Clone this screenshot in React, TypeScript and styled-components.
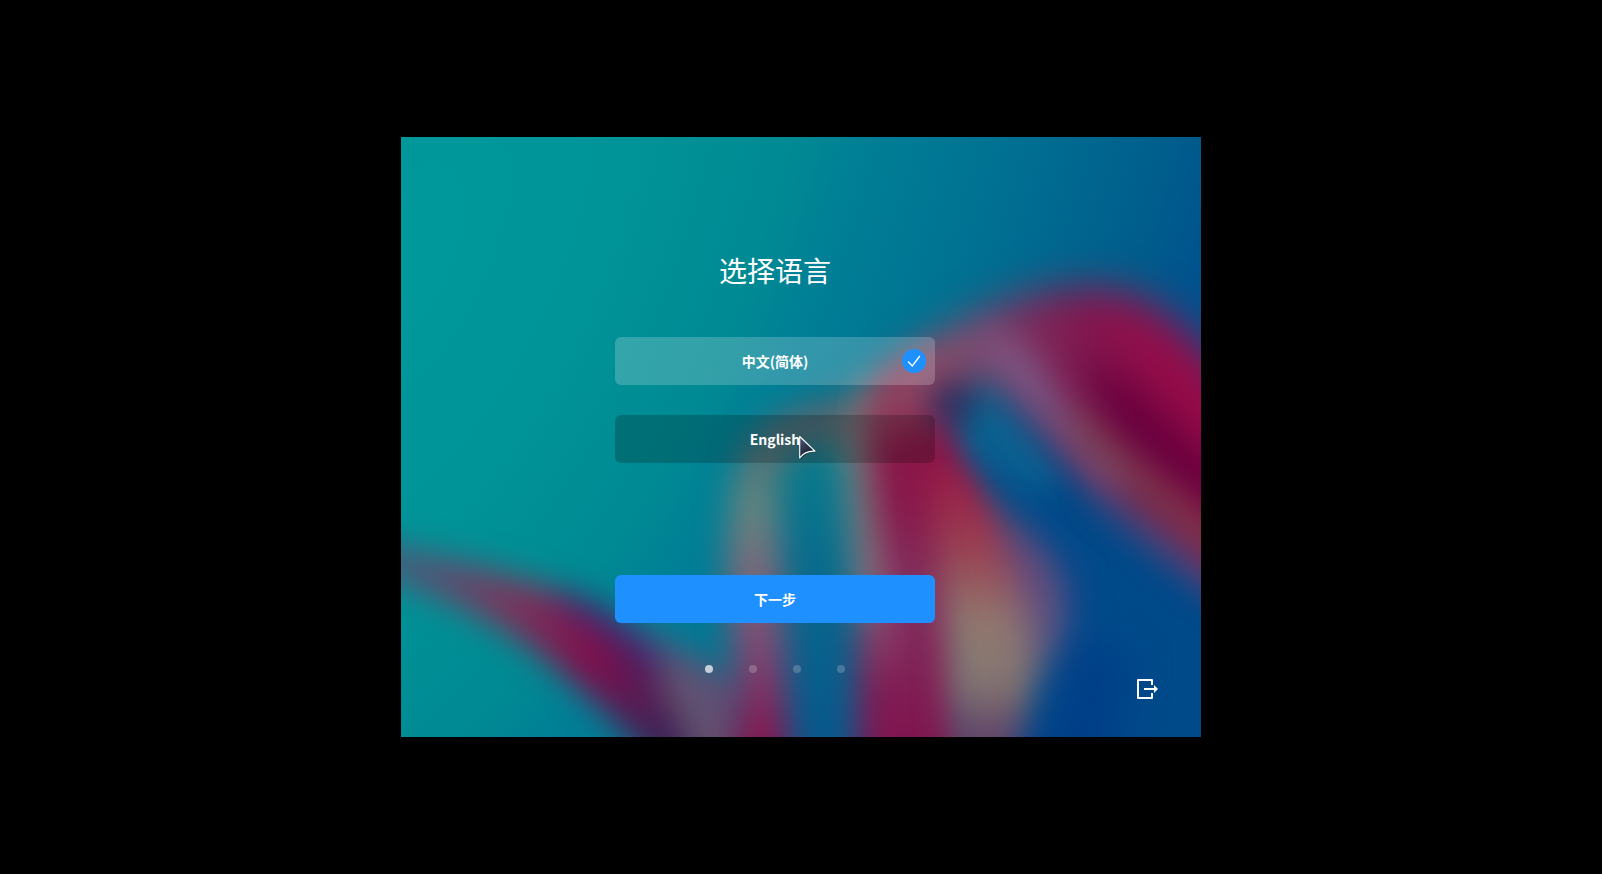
import React, { useState } from 'react';
import styled, { createGlobalStyle } from 'styled-components';

const GlobalStyle = createGlobalStyle`
  *, *::before, *::after { box-sizing: border-box; }
  body {
    margin: 0;
    background: #000;
    color: #fff;
    font-family: "Noto Sans CJK SC", "Noto Sans", sans-serif;
  }
`;

const Desktop = styled.div`
  min-height: 100vh;
  display: grid;
  place-items: center;
`;

const Screen = styled.main`
  position: relative;
  isolation: isolate;
  overflow: hidden;
  width: 100%;
  max-width: 800px;
  min-height: 600px;
  display: grid;
  grid-template-columns: 1fr auto;
`;

const WallpaperArt = styled.svg`
  position: absolute;
  inset: 0;
  z-index: -1;
  width: 100%;
  height: 100%;
`;

const Content = styled.form`
  display: flex;
  flex-direction: column;
  align-items: center;
  padding: 113px 0 64px 12px;
`;

const Title = styled.h1`
  margin: 0 0 47px;
  font-size: 28px;
  line-height: 40px;
  font-weight: 400;
`;

const Options = styled.fieldset`
  width: 100%;
  max-width: 320px;
  margin: 0 0 112px;
  padding: 0;
  border: 0;
  display: grid;
  gap: 30px;
`;

const Option = styled.label<{ $selected: boolean }>`
  position: relative;
  display: grid;
  grid-template-columns: 1fr auto 1fr;
  align-items: center;
  height: 48px;
  padding: 0 9px;
  border-radius: 6px;
  font-size: 14px;
  line-height: 20px;
  font-weight: 700;
  background: ${(p) => (p.$selected ? 'rgba(255, 255, 255, 0.2)' : 'rgba(0, 0, 0, 0.2)')};
`;

const Radio = styled.input`
  appearance: none;
  margin: 0;
  width: 0;
  height: 0;
`;

const CheckIcon = styled.svg`
  justify-self: end;
  width: 24px;
  height: 24px;
`;

const Pointer = styled.svg`
  position: absolute;
  left: 184px;
  top: 20px;
  width: 20px;
  height: 26px;
  pointer-events: none;
`;

const NextButton = styled.button`
  width: 100%;
  max-width: 320px;
  height: 48px;
  margin: 0 0 42px;
  padding: 0;
  border: 0;
  border-radius: 6px;
  background: #1e90ff;
  color: #fff;
  font: inherit;
  font-size: 14px;
  line-height: 20px;
  font-weight: 700;
`;

const Steps = styled.ol`
  display: flex;
  gap: 36px;
  margin: 0;
  padding: 0;
  list-style: none;
`;

const Step = styled.li<{ $current: boolean }>`
  width: 8px;
  height: 8px;
  border-radius: 50%;
  background: rgba(255, 255, 255, ${(p) => (p.$current ? 0.7 : 0.2)});
`;

const Side = styled.aside`
  display: flex;
  align-items: flex-end;
  padding: 0 40px 36px 0;
`;

const ExitButton = styled.button`
  width: 24px;
  height: 24px;
  padding: 0;
  border: 0;
  background: none;
  color: #fff;

  svg { display: block; }
`;

function Wallpaper() {
  return (
    <WallpaperArt viewBox="0 0 800 600" preserveAspectRatio="xMidYMid slice" aria-hidden="true">
      <defs>
        <radialGradient
          id="sea"
          gradientUnits="userSpaceOnUse"
          cx="0"
          cy="0"
          r="860"
          gradientTransform="translate(0 120) rotate(26) scale(1 2)"
        >
          <stop offset="0" stopColor="#00999b" />
          <stop offset="0.2" stopColor="#009498" />
          <stop offset="0.38" stopColor="#008a93" />
          <stop offset="0.46" stopColor="#007f96" />
          <stop offset="0.62" stopColor="#007092" />
          <stop offset="0.8" stopColor="#005c8c" />
          <stop offset="0.86" stopColor="#00538e" />
          <stop offset="1" stopColor="#004888" />
        </radialGradient>
        <linearGradient id="leftRibbon" gradientUnits="userSpaceOnUse" x1="0" y1="420" x2="260" y2="600">
          <stop offset="0" stopColor="#465c7c" />
          <stop offset="0.35" stopColor="#77385f" />
          <stop offset="0.68" stopColor="#7f0f4c" />
          <stop offset="1" stopColor="#3d2155" />
        </linearGradient>
        <linearGradient id="stemA" gradientUnits="userSpaceOnUse" x1="0" y1="270" x2="0" y2="600">
          <stop offset="0" stopColor="#55606c" />
          <stop offset="0.3" stopColor="#628680" />
          <stop offset="0.5" stopColor="#7c687a" />
          <stop offset="0.75" stopColor="#7f4570" />
          <stop offset="1" stopColor="#841850" />
        </linearGradient>
        <linearGradient id="hollow" gradientUnits="userSpaceOnUse" x1="0" y1="300" x2="0" y2="600">
          <stop offset="0" stopColor="#087e8c" />
          <stop offset="0.5" stopColor="#08688c" />
          <stop offset="1" stopColor="#06588c" />
        </linearGradient>
        <linearGradient id="stemB" gradientUnits="userSpaceOnUse" x1="0" y1="230" x2="0" y2="600">
          <stop offset="0" stopColor="#98405c" />
          <stop offset="0.18" stopColor="#8a1a4a" />
          <stop offset="0.35" stopColor="#88164a" />
          <stop offset="0.6" stopColor="#802f5e" />
          <stop offset="1" stopColor="#801550" />
        </linearGradient>
        <linearGradient id="petal" gradientUnits="userSpaceOnUse" x1="0" y1="330" x2="0" y2="600">
          <stop offset="0" stopColor="#9a1845" />
          <stop offset="0.3" stopColor="#9c4052" />
          <stop offset="0.58" stopColor="#927a6f" />
          <stop offset="0.8" stopColor="#847672" />
          <stop offset="1" stopColor="#604468" />
        </linearGradient>
        <linearGradient id="arch" gradientUnits="userSpaceOnUse" x1="460" y1="270" x2="760" y2="190">
          <stop offset="0" stopColor="#90405a" />
          <stop offset="0.3" stopColor="#88506c" />
          <stop offset="0.5" stopColor="#7a3a66" />
          <stop offset="0.74" stopColor="#80184f" />
          <stop offset="1" stopColor="#980b48" />
        </linearGradient>
        <filter id="soft" x="-50%" y="-50%" width="200%" height="200%" colorInterpolationFilters="sRGB">
          <feGaussianBlur stdDeviation="16" />
        </filter>
        <filter id="softer" x="-80%" y="-80%" width="260%" height="260%" colorInterpolationFilters="sRGB">
          <feGaussianBlur stdDeviation="20" />
        </filter>
      </defs>

      <rect width="800" height="600" fill="url(#sea)" />

      {/* lower left ribbon */}
      <g filter="url(#soft)">
        <path d="M200 474 Q260 500 340 545 L350 660 L250 660 Z" fill="#5c5276" />
        <path d="M-60 396 Q80 426 150 452 Q220 478 266 545 L305 660 L280 660 Q200 560 120 504 Q50 458 -60 428 Z" fill="url(#leftRibbon)" />
        <path d="M155 450 Q215 465 262 525 L252 542 Q200 488 160 466 Z" fill="#3f2470" />
        <path d="M270 540 Q315 570 335 660 L310 660 Q290 590 255 548 Z" fill="#66546e" />
      </g>

      {/* stems */}
      <g filter="url(#soft)">
        <path d="M328 660 L334 540 Q318 400 334 340 Q352 272 430 264 L480 240 L480 330 L388 330 L388 660 Z" fill="url(#stemA)" />
        <path d="M456 660 L456 270 Q480 215 570 215 L570 660 Z" fill="url(#stemB)" />
        <path d="M376 340 Q390 308 418 302 L440 310 L452 660 L390 660 Z" fill="url(#hollow)" />
        <path d="M440 320 Q444 270 466 238 L484 250 Q462 300 474 350 L484 470 L464 500 L450 440 Z" fill="#7c8880" fillOpacity="0.75" />
        <path d="M466 430 L484 400 L494 520 L470 540 Z" fill="#94587a" fillOpacity="0.5" />
      </g>

      {/* right-hand water behind the arch */}
      <g filter="url(#soft)">
        <path d="M545 255 L610 250 L870 500 L870 660 L610 660 L650 440 L565 310 Z" fill="#004a8a" />
        <path d="M550 255 L600 250 L660 340 L640 360 L560 300 Z" fill="#0b6492" />
        <path d="M526 330 L562 326 Q610 390 638 430 Q664 480 636 540 L610 660 L550 660 L546 500 Z" fill="url(#petal)" />
      </g>

      <g filter="url(#softer)">
        <path d="M670 500 L660 560 L620 640 L710 640 L730 520 Z" fill="#003486" fillOpacity="0.5" />
        <path d="M600 380 Q646 400 666 450 Q666 500 636 540 L626 480 Z" fill="#5c4684" fillOpacity="0.85" />
      </g>

      {/* arch */}
      <g filter="url(#softer)">
        <path d="M478 290 Q474 230 556 188 Q650 134 730 156 Q795 185 870 300 L870 484 Q770 412 692 346 L614 260 Q574 226 536 252 L510 290 Z" fill="url(#arch)" />
        <path d="M680 215 Q730 235 790 300 L870 370 L870 410 Q770 370 700 290 Z" fill="#68003e" />
      </g>
      <g filter="url(#soft)">
        <path d="M570 195 Q620 190 655 262 Q690 312 730 355 L700 350 L620 258 Z" fill="#80608c" fillOpacity="0.8" />
        <path d="M670 262 Q740 330 870 430 L870 460 Q750 385 668 296 Z" fill="#78404a" fillOpacity="0.8" />
        <path d="M700 355 Q780 410 870 480 L870 500 Q770 430 690 360 Z" fill="#5c5c86" fillOpacity="0.6" />
        <ellipse cx="552" cy="266" rx="24" ry="24" fill="#222a5c" fillOpacity="0.8" />
      </g>
    </WallpaperArt>
  );
}

function Check() {
  return (
    <CheckIcon viewBox="0 0 24 24" aria-hidden="true">
      <circle cx="12" cy="12" r="12" fill="#1e90ff" />
      <path d="M6 12.5 L10.3 17 L17.8 7" fill="none" stroke="#fff" strokeWidth="1.3" />
    </CheckIcon>
  );
}

function MousePointer() {
  return (
    <Pointer viewBox="0 0 20 26" aria-hidden="true">
      <defs>
        <linearGradient id="pointerFill" x1="0" y1="0" x2="0.5" y2="1">
          <stop offset="0" stopColor="#4a5a72" />
          <stop offset="1" stopColor="#141c30" />
        </linearGradient>
      </defs>
      <path d="M1.5 3 L17 17 Q7 17 2 25 Z" fill="#000" fillOpacity="0.3" />
      <path d="M0.7 1.5 L16 16.2 Q6 15.6 0.7 23 Z" fill="url(#pointerFill)" stroke="#fff" strokeWidth="1.1" strokeLinejoin="round" />
    </Pointer>
  );
}

const languages = [
  { id: 'zh', label: '中文(简体)' },
  { id: 'en', label: 'English' },
];

export default function App() {
  const [language, setLanguage] = useState('zh');

  return (
    <>
      <GlobalStyle />
      <Desktop>
        <Screen>
          <Wallpaper />
          <Content onSubmit={(e) => e.preventDefault()}>
            <Title id="title">选择语言</Title>
            <Options aria-labelledby="title">
              {languages.map(({ id, label }) => (
                <Option key={id} htmlFor={id} $selected={language === id}>
                  <Radio
                    type="radio"
                    id={id}
                    name="language"
                    checked={language === id}
                    onChange={() => setLanguage(id)}
                  />
                  <span>{label}</span>
                  {language === id && <Check />}
                  {id === 'en' && <MousePointer />}
                </Option>
              ))}
            </Options>
            <NextButton type="submit">下一步</NextButton>
            <Steps>
              {[0, 1, 2, 3].map((step) => (
                <Step key={step} $current={step === 0} />
              ))}
            </Steps>
          </Content>
          <Side>
            <ExitButton type="button" aria-label="退出">
              <svg width="24" height="24" viewBox="0 0 24 24" fill="none" stroke="currentColor" strokeWidth="2">
                <path d="M15 8 V3 H1 V21 H15 V16" strokeLinejoin="round" />
                <path d="M7 12 H18" />
                <path d="M17 8 L21 12 L17 16 Z" fill="currentColor" stroke="none" />
              </svg>
            </ExitButton>
          </Side>
        </Screen>
      </Desktop>
    </>
  );
}
